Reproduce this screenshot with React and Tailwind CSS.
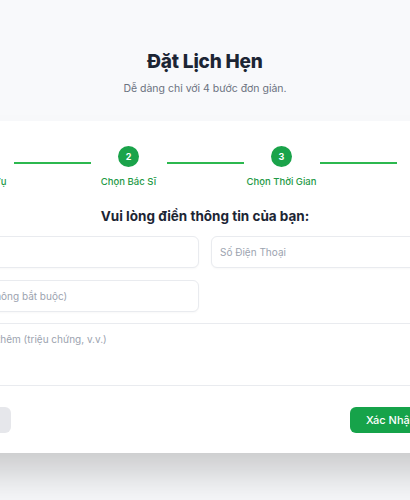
import React from 'react';

const steps = [
  { n: 1, label: 'Chọn Dịch Vụ', done: true },
  { n: 2, label: 'Chọn Bác Sĩ', done: true },
  { n: 3, label: 'Chọn Thời Gian', done: true },
  { n: 4, label: 'Xác Nhận', done: false },
];

// One step of the progress bar: circle + label
const Step = ({ n, label, done }) => (
  <div className="w-[76px] shrink-0 flex flex-col items-center">
    <div
      className={
        done
          ? 'w-[21px] h-[21px] rounded-full bg-[#1aa34a] text-white text-[9px] font-bold flex items-center justify-center'
          : 'w-[21px] h-[21px] rounded-full bg-[#e5e7eb] text-[#6b7280] text-[9px] font-bold flex items-center justify-center'
      }
    >
      {n}
    </div>
    <span
      className={
        done
          ? 'mt-[8px] text-[9.5px] leading-[14px] font-medium whitespace-nowrap text-[#1f9a47]'
          : 'mt-[8px] text-[9.5px] leading-[14px] font-medium whitespace-nowrap text-[#9ca3af]'
      }
    >
      {label}
    </span>
  </div>
);

const inputClass =
  'h-[32px] w-full rounded-[6px] border border-[#e9ebef] bg-white px-[8px] text-[10px] text-[#374151] placeholder:text-[#9ca3af] shadow-[0_1px_2px_rgba(0,0,0,0.03)] outline-none';

export default function App() {
  return (
    <div className="min-h-[500px] bg-[#f8f9fb] overflow-hidden font-['Inter',sans-serif] text-[#1f2937]">
      {/* Page header */}
      <div className="pt-[50px] text-center">
        <h1 className="text-[19px] leading-[24px] font-extrabold text-[#1c2534] tracking-[-0.2px]">Đặt Lịch Hẹn</h1>
        <p className="mt-[8px] text-[10.5px] leading-[14px] text-[#6b7280]">Dễ dàng chỉ với 4 bước đơn giản.</p>
      </div>

      {/* Booking card */}
      <div className="mt-[25px] flex justify-center">
        <div className="w-[572px] shrink-0 bg-white px-[30px] pt-[25px] pb-[20px] shadow-[0_28px_40px_-8px_rgba(0,0,0,0.2)]">
          {/* Stepper */}
          <div className="flex justify-center">
            {steps.map((s, i) => (
              <React.Fragment key={s.n}>
                <Step {...s} />
                {i < steps.length - 1 && (
                  <div className="w-[77px] shrink-0 h-[2px] mt-[16px] bg-[#2cb84f]" />
                )}
              </React.Fragment>
            ))}
          </div>

          <h2 className="mt-[17px] text-center text-[13.5px] leading-[20px] font-bold text-[#1c2534]">
            Vui lòng điền thông tin của bạn:
          </h2>

          <form className="mt-[10px]">
            <div className="grid grid-cols-2 gap-x-[12px] gap-y-[12px]">
              <input className={inputClass} placeholder="Họ Tên" />
              <input className={inputClass} placeholder="Số Điện Thoại" />
              <input className={inputClass} placeholder="Email (không bắt buộc)" />
            </div>
            <textarea
              className="mt-[11px] block h-[63px] w-full resize-none rounded-[6px] border border-[#e9ebef] bg-white px-[8px] py-[8px] text-[10px] leading-[14px] placeholder:text-[#9ca3af] outline-none"
              placeholder="Ghi chú thêm (triệu chứng, v.v.)"
            />

            <div className="mt-[21px] flex items-center justify-between">
              <button
                type="button"
                className="h-[26px] w-[62px] rounded-[6px] bg-[#e6e7eb] pl-[6px] text-left text-[10.5px] font-medium text-[#374151] whitespace-nowrap"
              >
                Quay Lại
              </button>
              <button
                type="button"
                className="h-[26px] w-[111px] overflow-hidden rounded-[6px] bg-[#16a34a] pl-[16px] text-left text-[11px] font-medium text-white whitespace-nowrap"
              >
                Xác Nhận Đặt Lịch
              </button>
            </div>
          </form>
        </div>
      </div>
    </div>
  );
}
